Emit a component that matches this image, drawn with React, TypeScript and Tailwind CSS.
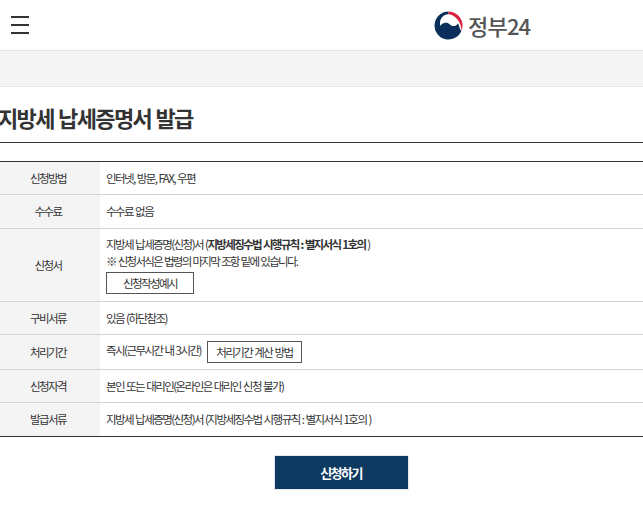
const FONT = "font-['Noto_Sans_CJK_KR','Noto_Sans',sans-serif]";

function Logo() {
  return (
    <div className="flex items-center gap-[5px]">
      <svg width="29" height="29" viewBox="0 0 29 29">
        <path
          d="M14.5.5A14 14 0 1 0 27.4 20C25 17.5 25.5 14.5 24 12.5 22 15.5 18.5 16 16 13.5 13.5 11 8.5 11 6.5 15 4.5 9.5 8.5 3.2 14.5 3.3Z"
          fill="#0b2f5b"
        />
        <path d="M14.5.5A14 14 0 0 1 27.4 20C27.6 12 22 4 14.5 3.3Z" fill="#d8233f" />
      </svg>
      <span className={`${FONT} text-[22px] leading-none font-medium tracking-[-0.8px] text-[#555]`}>정부24</span>
    </div>
  );
}

function Row({ label, className, children }: { label: string; className: string; children: React.ReactNode }) {
  return (
    <div className={`flex border-b border-[#d4d4d4] last:border-b-[#333] ${className}`}>
      <div className="flex w-[100px] shrink-0 items-center justify-center bg-[#f4f4f4] pr-[4px]">{label}</div>
      <div className="flex flex-1 flex-col justify-center pl-[6px]">{children}</div>
    </div>
  );
}

export default function App() {
  return (
    <div className={`${FONT} h-[510px] w-[643px] overflow-hidden bg-white text-[11.5px] leading-[17px] tracking-[-1.55px] [word-spacing:1px] text-[#333]`}>
      <header className="flex h-[51px] items-center border-b border-[#e2e4e8]">
        <div className="ml-[11px] flex w-[18px] flex-col gap-[6px]">
          <span className="h-[2px] bg-[#333]" />
          <span className="h-[2px] bg-[#333]" />
          <span className="h-[2px] bg-[#333]" />
        </div>
        <div className="ml-[405px]">
          <Logo />
        </div>
      </header>
      <div className="h-[36px] border-b border-[#e6e6e6] bg-[#f5f4f4]" />
      <h1 className="-ml-[2px] h-[56px] border-b border-[#333] pt-[13px] text-[22px] leading-[34px] font-bold tracking-[-1.65px]">
        지방세 납세증명서 발급
      </h1>
      <div className="mt-[18px] border-t border-[#333]">
        <Row label="신청방법" className="h-[33px]">
          <p>인터넷, 방문, FAX, 우편</p>
        </Row>
        <Row label="수수료" className="h-[34px]">
          <p>수수료 없음</p>
        </Row>
        <Row label="신청서" className="h-[73px]">
          <p>
            지방세 납세증명(신청)서 (<b className="font-bold tracking-[-1.65px]">지방세징수법 시행규칙 : 별지서식 1호의</b> )
          </p>
          <p className="tracking-[-1.7px]">※ 신청서식은 법령의 마지막 조항 밑에 있습니다.</p>
          <button className="mt-[2px] h-[22px] w-[88px] border border-[#555] text-center leading-[20px] [word-spacing:1px]">신청작성예시</button>
        </Row>
        <Row label="구비서류" className="h-[33px]">
          <p>있음 (하단참조)</p>
        </Row>
        <Row label="처리기간" className="h-[35px]">
          <div className="flex items-center gap-[6px]">
            <span className="-mt-[3px]">즉시(근무시간 내 3시간)</span>
            <button className="h-[22px] w-[95px] border border-[#555] text-center leading-[20px] [word-spacing:1px]">처리기간 계산 방법</button>
          </div>
        </Row>
        <Row label="신청자격" className="h-[33px]">
          <p>본인 또는 대리인(온라인은 대리인 신청 불가)</p>
        </Row>
        <Row label="발급서류" className="h-[34px]">
          <p>지방세 납세증명(신청)서 (지방세징수법 시행규칙 : 별지서식 1호의 )</p>
        </Row>
      </div>
      <div className="mt-[18px] flex justify-center pl-[39px]">
        <button className="h-[35px] w-[135px] border border-[#e4e8ec] bg-[#0e3a62] text-[13px] font-bold text-white">
          신청하기
        </button>
      </div>
    </div>
  );
}
